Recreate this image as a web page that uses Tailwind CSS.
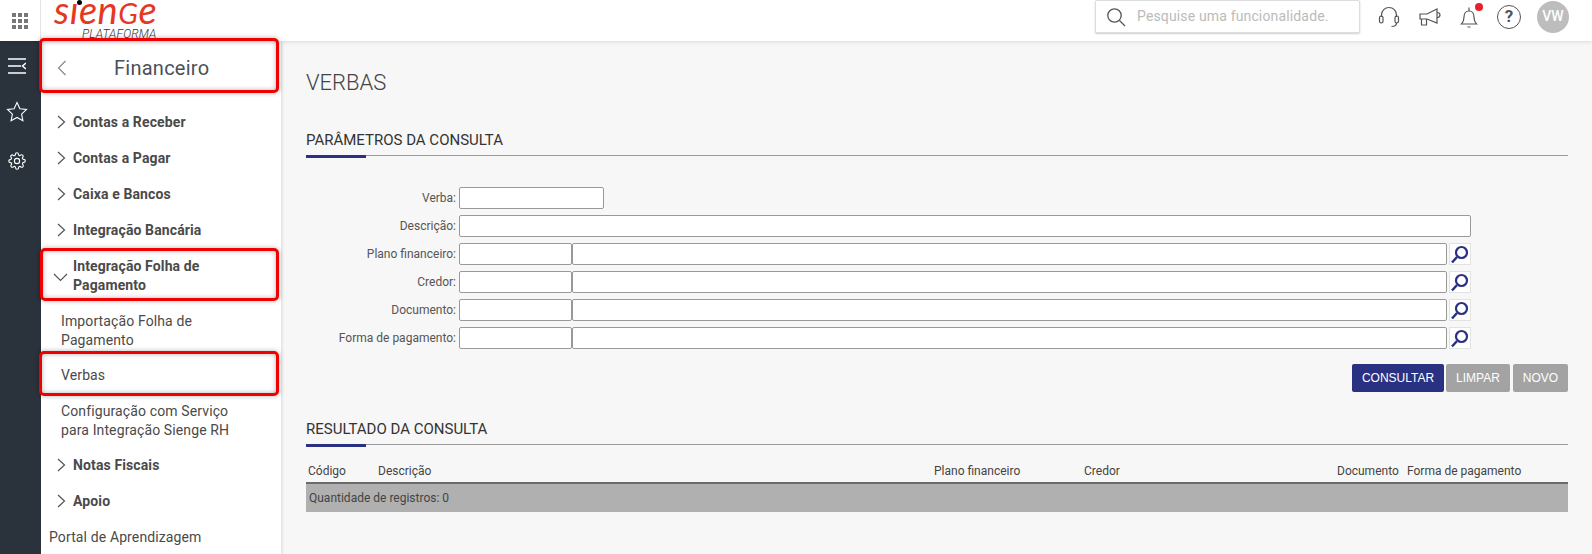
<!DOCTYPE html>
<html lang="pt-BR">
<head>
  <meta charset="UTF-8">
  <title>Verbas</title>
  <script src="https://cdn.jsdelivr.net/npm/@tailwindcss/browser@4"></script>
</head>
<body class="w-[1592px] h-[554px] overflow-hidden bg-[#f7f7f7] font-['Roboto',sans-serif] text-[#4a4a4a]">
  <!-- topo -->
  <header class="relative z-10 flex h-[41px] overflow-hidden bg-white shadow-[0_1px_4px_rgba(0,0,0,0.12)]">
    <div class="flex h-full w-[41px] shrink-0 items-center justify-center border-r border-[#e4e4e4]">
      <div class="grid grid-cols-3 gap-[2px]">
        <span class="size-[4px] bg-[#777]"></span><span class="size-[4px] bg-[#777]"></span><span class="size-[4px] bg-[#777]"></span>
        <span class="size-[4px] bg-[#777]"></span><span class="size-[4px] bg-[#777]"></span><span class="size-[4px] bg-[#777]"></span>
        <span class="size-[4px] bg-[#777]"></span><span class="size-[4px] bg-[#777]"></span><span class="size-[4px] bg-[#777]"></span>
      </div>
    </div>
    <div class="relative h-full w-[130px] shrink-0">
      <span class="absolute left-[13px] top-0 font-['Lato',sans-serif] text-[38px] leading-[19px] italic tracking-[0.5px] text-[#e5381f]">sien<span class="text-[29px]">G</span>e</span>
      <span class="absolute left-[36px] top-[0px] size-[5px] rounded-full bg-black"></span>
      <span class="absolute left-[41px] top-[28px] text-[12px] leading-[13px] font-light italic tracking-[0.15px] text-[#333]">PLATAFORMA</span>
    </div>
    <div class="ml-auto mr-[23px] flex h-[33px] items-center">
      <div class="flex h-[33px] w-[265px] items-center rounded-[2px] border border-[#ddd] bg-white pl-[10px] shadow-[0_1px_2px_rgba(0,0,0,0.2)]">
        <svg class="size-[20px] text-[#555]" viewBox="0 0 20 20" fill="none" stroke="currentColor" stroke-width="1.3"><circle cx="8.5" cy="8.5" r="6.7"/><path d="M13.5 13.5l5.5 5.5"/></svg>
        <span class="ml-[11px] text-[14px] tracking-[0.15px] text-[#bbb]">Pesquise uma funcionalidade.</span>
      </div>
      <svg class="ml-[17px] size-[24px] text-[#555]" viewBox="0 0 24 24" fill="none" stroke="currentColor" stroke-width="1.2"><path d="M4.500 12V10a7.500 7.500 0 0 1 15 0v2"/><rect x="2.500" y="11" width="3.500" height="7" rx="1.700"/><rect x="18" y="11" width="3.500" height="7" rx="1.700"/><path d="M19.500 18c0 2-2 3.500-5 3.500"/></svg>
      <svg class="ml-[17px] size-[24px] text-[#555]" viewBox="0 0 24 24" fill="none" stroke="currentColor" stroke-width="1.2"><path d="M2 9h7l10-5v14L9 14H2z"/><path d="M19 7.500c2 0 3 1 3 2.500s-1 2.500-3 2.500"/><path d="M3.500 14v6h5v-6"/></svg>
      <div class="relative ml-[15px]">
        <svg class="size-[24px] text-[#555]" viewBox="0 0 24 24" fill="none" stroke="currentColor" stroke-width="1.2"><path d="M4.500 19h15c-1.500-1.500-2.500-3-2.500-7 0-3.500-2-6-5-6s-5 2.500-5 6c0 4-1 5.500-2.500 7z"/><path d="M12 2.500V6M10.500 22h3"/></svg>
        <span class="absolute right-[-2px] top-[-2px] size-[8px] rounded-full bg-[#e8202a]"></span>
      </div>
      <div class="ml-[16px] flex size-[24px] items-center justify-center rounded-full border-[1.5px] border-[#555] text-[17px] font-bold text-[#555]">?</div>
      <div class="ml-[16px] flex size-[32px] items-center justify-center rounded-full bg-[#bdbdbd] text-[14px] font-medium text-white">VW</div>
    </div>
  </header>

  <div class="flex h-[513px]">
    <!-- barra escura -->
    <aside class="flex w-[41px] shrink-0 flex-col items-center bg-[#2a323c] pr-[7px] pt-[16px] text-white">
      <svg class="size-[18px]" viewBox="0 0 18 18" fill="none" stroke="currentColor" stroke-width="1.5"><path d="M0 2h18M0 9h13M0 16h18M18 6l-3.500 3 3.500 3"/></svg>
      <svg class="mt-[26px] size-[22px]" viewBox="0 0 22 22" fill="none" stroke="currentColor" stroke-width="1.1"><path d="M11 1.500l2.900 6.200 6.600.8-4.900 4.600 1.300 6.700-5.900-3.300-5.900 3.300 1.300-6.700-4.900-4.600 6.600-.8z"/></svg>
      <svg class="mt-[29px] size-[18px]" viewBox="0 0 24 24" fill="none" stroke="currentColor" stroke-width="1.500"><circle cx="12" cy="12" r="3.500"/><path d="M19.400 15a1.650 1.650 0 0 0 .33 1.820l.06.06a2 2 0 1 1-2.830 2.830l-.06-.06a1.650 1.650 0 0 0-2.800 1.170V21a2 2 0 1 1-4 0v-.09a1.650 1.650 0 0 0-2.800-1.170l-.06.06a2 2 0 1 1-2.830-2.830l.06-.06a1.650 1.650 0 0 0-1.170-2.800H3a2 2 0 1 1 0-4h.09a1.650 1.650 0 0 0 1.170-2.800l-.06-.06a2 2 0 1 1 2.830-2.830l.06.06a1.650 1.650 0 0 0 2.800-1.170V3a2 2 0 1 1 4 0v.09a1.650 1.650 0 0 0 2.800 1.170l.06-.06a2 2 0 1 1 2.830 2.830l-.06.06a1.650 1.650 0 0 0 1.170 2.800H21a2 2 0 1 1 0 4h-.09a1.650 1.650 0 0 0-1.510 1z"/></svg>
    </aside>

    <!-- menu -->
    <nav class="relative w-[240px] shrink-0 bg-white text-[14px] tracking-[0.12px] shadow-[1px_0_3px_rgba(0,0,0,0.12)]">
      <div class="flex h-[54px] items-center">
        <svg class="ml-[16px] h-[16px] w-[10px] text-[#888]" viewBox="0 0 10 16" fill="none" stroke="currentColor" stroke-width="1.200"><path d="M8.500 1l-7 7 7 7"/></svg>
        <span class="ml-[47px] text-[20px] tracking-[0.25px] text-[#4a5058]">Financeiro</span>
      </div>
      <div class="pt-[9px] font-bold leading-[19px]">
        <div class="flex h-[36px] items-center pl-[16px]"><svg class="h-[14px] w-[9px] text-[#555]" viewBox="0 0 9 14" fill="none" stroke="currentColor" stroke-width="1.200"><path d="M1 1l6.500 6L1 13"/></svg><span class="ml-[7px]">Contas a Receber</span></div>
        <div class="flex h-[36px] items-center pl-[16px]"><svg class="h-[14px] w-[9px] text-[#555]" viewBox="0 0 9 14" fill="none" stroke="currentColor" stroke-width="1.200"><path d="M1 1l6.500 6L1 13"/></svg><span class="ml-[7px]">Contas a Pagar</span></div>
        <div class="flex h-[36px] items-center pl-[16px]"><svg class="h-[14px] w-[9px] text-[#555]" viewBox="0 0 9 14" fill="none" stroke="currentColor" stroke-width="1.200"><path d="M1 1l6.500 6L1 13"/></svg><span class="ml-[7px]">Caixa e Bancos</span></div>
        <div class="flex h-[36px] items-center pl-[16px]"><svg class="h-[14px] w-[9px] text-[#555]" viewBox="0 0 9 14" fill="none" stroke="currentColor" stroke-width="1.200"><path d="M1 1l6.500 6L1 13"/></svg><span class="ml-[7px]">Integração Bancária</span></div>
        <div class="flex h-[56px] items-center pl-[12px]"><svg class="mt-[2px] h-[9px] w-[15px] text-[#555]" viewBox="0 0 15 9" fill="none" stroke="currentColor" stroke-width="1.200"><path d="M1 1l6.500 6.500L14 1"/></svg><span class="ml-[5px]">Integração Folha de<br>Pagamento</span></div>
        <div class="pl-[20px] font-normal">
          <div class="flex h-[54px] items-center">Importação Folha de<br>Pagamento</div>
          <div class="flex h-[35px] items-center">Verbas</div>
          <div class="flex h-[55px] items-center">Configuração com Serviço<br>para Integração Sienge RH</div>
        </div>
        <div class="-mt-[1px] flex h-[36px] items-center pl-[16px]"><svg class="h-[14px] w-[9px] text-[#555]" viewBox="0 0 9 14" fill="none" stroke="currentColor" stroke-width="1.200"><path d="M1 1l6.500 6L1 13"/></svg><span class="ml-[7px]">Notas Fiscais</span></div>
        <div class="flex h-[36px] items-center pl-[16px]"><svg class="h-[14px] w-[9px] text-[#555]" viewBox="0 0 9 14" fill="none" stroke="currentColor" stroke-width="1.200"><path d="M1 1l6.500 6L1 13"/></svg><span class="ml-[7px]">Apoio</span></div>
        <div class="flex h-[36px] items-center pl-[8px] font-normal">Portal de Aprendizagem</div>
      </div>
      <!-- marcações vermelhas -->
      <div class="absolute left-[-2px] top-[-3px] z-20 h-[55px] w-[240px] rounded-[5px] border-[3px] border-[#f00000] shadow-[0_0_5px_rgba(0,0,0,0.3),inset_0_0_5px_rgba(0,0,0,0.3)]"></div>
      <div class="absolute left-[-1px] top-[207px] z-20 h-[53px] w-[239px] rounded-[5px] border-[3px] border-[#f00000] shadow-[0_0_5px_rgba(0,0,0,0.3),inset_0_0_5px_rgba(0,0,0,0.3)]"></div>
      <div class="absolute left-[-2px] top-[310px] z-20 h-[45px] w-[240px] rounded-[5px] border-[3px] border-[#f00000] shadow-[0_0_5px_rgba(0,0,0,0.3),inset_0_0_5px_rgba(0,0,0,0.3)]"></div>
    </nav>

    <!-- conteudo -->
    <main class="flex-1 pl-[25px] pr-[24px] text-[#444]">
      <h1 class="mt-[28px] text-[22px] leading-[28px] font-light text-[#444]">VERBAS</h1>
      <section class="mt-[33px]">
        <h2 class="text-[15px] leading-[20px] text-[#333]">PARÂMETROS DA CONSULTA</h2>
        <div class="relative mt-[5px] h-[3px] border-t border-[#999]"><span class="absolute left-0 top-[-1px] h-[3px] w-[60px] bg-[#2a3082]"></span></div>
      </section>

      <form class="mt-[29px] grid grid-cols-[150px_1fr] gap-x-[3px] gap-y-[6px] text-[12px] text-[#555]">
        <label class="self-center text-right">Verba:</label>
        <input class="h-[22px] w-[145px] rounded-[2px] border border-[#999] bg-white">

        <label class="self-center text-right">Descrição:</label>
        <input class="h-[22px] w-[1012px] rounded-[2px] border border-[#999] bg-white">

        <label class="self-center text-right">Plano financeiro:</label>
        <div class="flex w-[1012px]"><input class="h-[22px] w-[113px] rounded-[2px] border border-[#999] bg-white"><input class="h-[22px] w-[875px] rounded-[2px] border border-[#999] bg-white">
          <button type="button" class="ml-[2px] flex size-[22px] items-center justify-center border border-[#e2e2e2] bg-white"><svg class="size-[20px] text-[#2a3082]" viewBox="0 0 20 20" fill="none" stroke="currentColor"><circle cx="11.500" cy="8.500" r="5.500" stroke-width="2.200"/><path d="M7 13l-5 5.500" stroke-width="2.500"/></svg></button></div>

        <label class="self-center text-right">Credor:</label>
        <div class="flex w-[1012px]"><input class="h-[22px] w-[113px] rounded-[2px] border border-[#999] bg-white"><input class="h-[22px] w-[875px] rounded-[2px] border border-[#999] bg-white">
          <button type="button" class="ml-[2px] flex size-[22px] items-center justify-center border border-[#e2e2e2] bg-white"><svg class="size-[20px] text-[#2a3082]" viewBox="0 0 20 20" fill="none" stroke="currentColor"><circle cx="11.500" cy="8.500" r="5.500" stroke-width="2.200"/><path d="M7 13l-5 5.500" stroke-width="2.500"/></svg></button></div>

        <label class="self-center text-right">Documento:</label>
        <div class="flex w-[1012px]"><input class="h-[22px] w-[113px] rounded-[2px] border border-[#999] bg-white"><input class="h-[22px] w-[875px] rounded-[2px] border border-[#999] bg-white">
          <button type="button" class="ml-[2px] flex size-[22px] items-center justify-center border border-[#e2e2e2] bg-white"><svg class="size-[20px] text-[#2a3082]" viewBox="0 0 20 20" fill="none" stroke="currentColor"><circle cx="11.500" cy="8.500" r="5.500" stroke-width="2.200"/><path d="M7 13l-5 5.500" stroke-width="2.500"/></svg></button></div>

        <label class="self-center text-right">Forma de pagamento:</label>
        <div class="flex w-[1012px]"><input class="h-[22px] w-[113px] rounded-[2px] border border-[#999] bg-white"><input class="h-[22px] w-[875px] rounded-[2px] border border-[#999] bg-white">
          <button type="button" class="ml-[2px] flex size-[22px] items-center justify-center border border-[#e2e2e2] bg-white"><svg class="size-[20px] text-[#2a3082]" viewBox="0 0 20 20" fill="none" stroke="currentColor"><circle cx="11.500" cy="8.500" r="5.500" stroke-width="2.200"/><path d="M7 13l-5 5.500" stroke-width="2.500"/></svg></button></div>
      </form>

      <div class="mt-[15px] flex justify-end gap-[2px] font-['Liberation_Sans',sans-serif] text-[12px] text-white">
        <button class="h-[28px] w-[92px] rounded-[2px] bg-[#2a3082]">CONSULTAR</button>
        <button class="h-[28px] w-[64px] rounded-[2px] bg-[#a3a3a3]">LIMPAR</button>
        <button class="ml-[1px] h-[28px] w-[55px] rounded-[2px] bg-[#a3a3a3]">NOVO</button>
      </div>

      <section class="mt-[27px]">
        <h2 class="text-[15px] leading-[20px] text-[#333]">RESULTADO DA CONSULTA</h2>
        <div class="relative mt-[5px] h-[3px] border-t border-[#999]"><span class="absolute left-0 top-[-1px] h-[3px] w-[60px] bg-[#2a3082]"></span></div>
      </section>

      <table class="mt-[15px] w-full table-fixed text-left text-[12px] text-[#444]">
        <thead>
          <tr class="h-[21px] border-b-2 border-[#6b6b6b] align-top">
            <th class="w-[72px] pl-[2px] font-normal">Código</th>
            <th class="w-[556px] font-normal">Descrição</th>
            <th class="w-[150px] font-normal">Plano financeiro</th>
            <th class="w-[253px] font-normal">Credor</th>
            <th class="w-[70px] font-normal">Documento</th>
            <th class="font-normal">Forma de pagamento</th>
          </tr>
        </thead>
        <tbody>
          <tr class="h-[29px] bg-[#b0b0b0]">
            <td colspan="6" class="pl-[3px]">Quantidade de registros: 0</td>
          </tr>
        </tbody>
      </table>
    </main>
  </div>
</body>
</html>
